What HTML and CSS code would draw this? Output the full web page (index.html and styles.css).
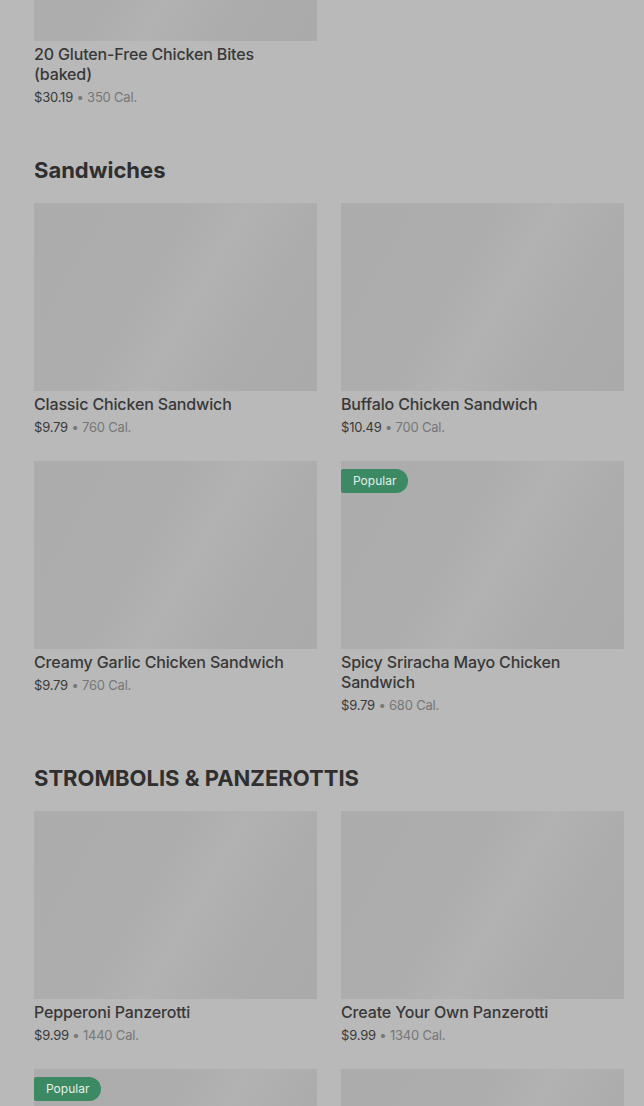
FILE: index.html
```html
<!DOCTYPE html>
<html lang="en">
<head>
  <meta charset="UTF-8">
  <title>Menu</title>
  <meta name="viewport" content="width=device-width, initial-scale=1.0">
  <link rel="stylesheet" href="styles.css">
</head>
<body>

  <main class="menu">

    <!-- Previous category (scrolled past) -->
    <section class="category">
      <div class="item-grid">
        <div class="item">
          <div class="item-image"></div>
          <div class="item-title">20 Gluten-Free Chicken Bites (baked)</div>
          <div class="item-meta"><span class="price">$30.19</span> • <span class="cal">350 Cal.</span></div>
        </div>
      </div>
    </section>

    <section class="category">
      <h2 class="category-title">Sandwiches</h2>
      <div class="item-grid">
        <div class="item">
          <div class="item-image"></div>
          <div class="item-title">Classic Chicken Sandwich</div>
          <div class="item-meta"><span class="price">$9.79</span> • <span class="cal">760 Cal.</span></div>
        </div>
        <div class="item">
          <div class="item-image"></div>
          <div class="item-title">Buffalo Chicken Sandwich</div>
          <div class="item-meta"><span class="price">$10.49</span> • <span class="cal">700 Cal.</span></div>
        </div>
        <div class="item">
          <div class="item-image"></div>
          <div class="item-title">Creamy Garlic Chicken Sandwich</div>
          <div class="item-meta"><span class="price">$9.79</span> • <span class="cal">760 Cal.</span></div>
        </div>
        <div class="item">
          <div class="item-image">
            <span class="badge">Popular</span>
          </div>
          <div class="item-title">Spicy Sriracha Mayo Chicken Sandwich</div>
          <div class="item-meta"><span class="price">$9.79</span> • <span class="cal">680 Cal.</span></div>
        </div>
      </div>
    </section>

    <section class="category">
      <h2 class="category-title">STROMBOLIS &amp; PANZEROTTIS</h2>
      <div class="item-grid">
        <div class="item">
          <div class="item-image"></div>
          <div class="item-title">Pepperoni Panzerotti</div>
          <div class="item-meta"><span class="price">$9.99</span> • <span class="cal">1440 Cal.</span></div>
        </div>
        <div class="item">
          <div class="item-image"></div>
          <div class="item-title">Create Your Own Panzerotti</div>
          <div class="item-meta"><span class="price">$9.99</span> • <span class="cal">1340 Cal.</span></div>
        </div>
        <!-- next row, only the image tops are on screen -->
        <div class="item">
          <div class="item-image">
            <span class="badge">Popular</span>
          </div>
        </div>
        <div class="item">
          <div class="item-image"></div>
        </div>
      </div>
    </section>

  </main>

</body>
</html>
```

FILE: styles.css
```css
body {
  margin: 0;
  font-family: Inter, 'Noto Sans', sans-serif;
  background-color: #b9b9b9;
  color: #363636;
  overflow: hidden;
}

/* page is scrolled down part way */
.menu {
  margin-top: -147px;
  padding: 0 20px 0 34px;
}

.category-title {
  margin: 49px 0 19px;
  font-size: 22px;
  line-height: 28px;
  font-weight: 700;
  letter-spacing: 0;
  color: #2f2f2f;
}

.item-grid {
  display: grid;
  grid-template-columns: 283px 283px;
  column-gap: 24px;
  row-gap: 24px;
}

.item-image {
  position: relative;
  height: 188px;
  background: linear-gradient(120deg, #acacac 0%, #adadad 40%, #b2b2b2 55%, #acacac 75%, #aaaaaa 100%);
}

.badge {
  position: absolute;
  top: 8px;
  left: 0;
  height: 24px;
  line-height: 24px;
  padding: 0 12px;
  font-size: 12px;
  color: #e6efe9;
  background-color: #3b8a63;
  border-radius: 2px 12px 12px 2px;
}

.item-title {
  margin-top: 3px;
  padding-right: 12px;
  font-size: 16px;
  line-height: 20px;
  font-weight: 500;
  letter-spacing: -0.15px;
  color: #383838;
}

.item-meta {
  margin-top: 3px;
  font-size: 13px;
  line-height: 20px;
  letter-spacing: -0.2px;
  color: #777;
}

.item-meta .price {
  color: #3a3a3a;
}

.item-meta .cal {
  color: #777;
}
```
